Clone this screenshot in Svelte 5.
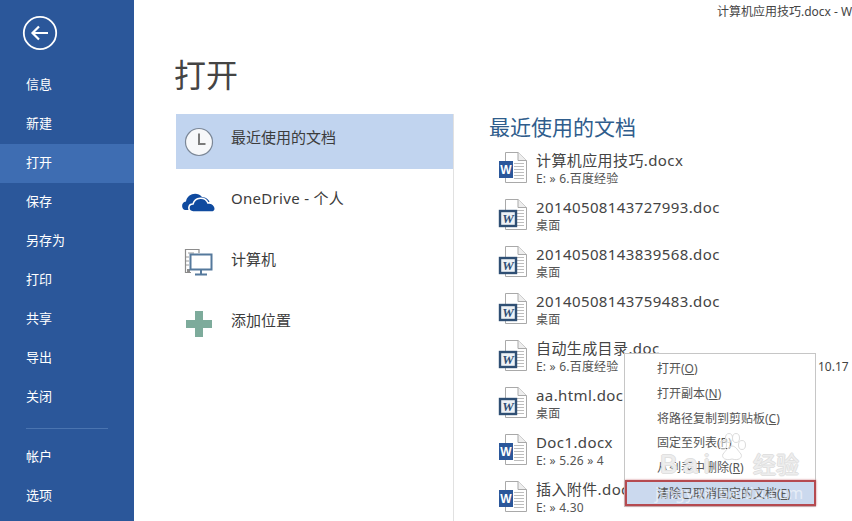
<script>
	const nav = ['信息', '新建', '打开', '保存', '另存为', '打印', '共享', '导出', '关闭'];
	const navBottom = ['帐户', '选项'];
	const docs = [
		{ name: '计算机应用技巧.docx', path: 'E: » 6.百度经验', modern: true },
		{ name: '20140508143727993.doc', path: '桌面', modern: false },
		{ name: '20140508143839568.doc', path: '桌面', modern: false },
		{ name: '20140508143759483.doc', path: '桌面', modern: false },
		{ name: '自动生成目录.doc', path: 'E: » 6.百度经验', modern: false },
		{ name: 'aa.html.doc', path: '桌面', modern: false },
		{ name: 'Doc1.docx', path: 'E: » 5.26 » 4', modern: true },
		{ name: '插入附件.docx', path: 'E: » 4.30', modern: true }
	];
	const menu = [
		{ label: '打开', key: 'O' },
		{ label: '打开副本', key: 'N' },
		{ label: '将路径复制到剪贴板', key: 'C' },
		{ label: '固定至列表', key: 'P' },
		{ label: '从列表中删除', key: 'R' },
		{ label: '清除已取消固定的文档', key: 'E', active: true }
	];
</script>

{#snippet docIcon(modern)}
	<svg class="doc-icon" viewBox="0 0 30 32" aria-hidden="true">
		<path d="M7.5 .5H20L28.5 8.5V30.5H7.5Z" fill="#fff" stroke="#a9a9a9" />
		<path d="M20 .5V8.5H28.5" fill="#eee" stroke="#a9a9a9" />
		<path d="M16 11.5H26M16 14.5H26M16 17.5H26M16 20.5H26M16 23.5H26M16 26.5H26" stroke="#bdbdbd" />
		{#if modern}
			<rect x="1" y="9" width="14" height="17" fill="#2b579a" />
			<text x="8" y="22" class="w-solid">W</text>
		{:else}
			<rect x="2" y="12" width="16" height="15" fill="#eef2f6" stroke="#2f4f74" stroke-width="2.4" />
			<text x="10" y="24" class="w-old">W</text>
		{/if}
	</svg>
{/snippet}

<div class="window">
	<aside class="sidebar">
		<div class="back">
			<svg viewBox="0 0 36 36" width="36" height="36" aria-hidden="true">
				<circle cx="18" cy="18" r="16.2" fill="none" stroke="#fff" stroke-width="1.8" />
				<path d="M10.5 18H26M17 11.5L10.5 18L17 24.5" fill="none" stroke="#fff" stroke-width="2.2" />
			</svg>
		</div>
		<nav class="nav">
			{#each nav as item}
				<div class="nav-item" class:selected={item === '打开'}>{item}</div>
			{/each}
		</nav>
		<div class="nav-rule"></div>
		<nav class="nav">
			{#each navBottom as item}
				<div class="nav-item">{item}</div>
			{/each}
		</nav>
	</aside>

	<main class="content">
		<div class="doc-title">计算机应用技巧.docx - W</div>
		<h1>打开</h1>
		<div class="columns">
			<section class="places">
				<div class="place selected">
					<svg class="place-icon" viewBox="0 0 30 30" aria-hidden="true">
						<circle cx="15" cy="15" r="13.5" fill="#f7f8fa" stroke="#7b8797" stroke-width="1.2" />
						<path d="M15 6.5V17H21.5" fill="none" stroke="#7b7b7b" stroke-width="2" />
					</svg>
					<span>最近使用的文档</span>
				</div>
				<div class="place">
					<svg class="place-icon cloud" viewBox="0 0 34 24" aria-hidden="true">
						<path d="M3 21C-1 20 -1 13 4 12.500C5 5 15 2 20 8C25 8 28 12 28 15L12 21Z" fill="#0f4a9f" />
						<path d="M11 23C5 22 6 15 11 15C13 8 23 7 26 14C32 13 36 21 31 23Z" fill="#0f4a9f" stroke="#fff" stroke-width="1.6" />
					</svg>
					<span class="latin">OneDrive - 个人</span>
				</div>
				<div class="place">
					<svg class="place-icon" viewBox="0 0 30 30" aria-hidden="true">
						<path d="M7 24.500H1.500V1.500H15V5" fill="none" stroke="#8c8c8c" stroke-width="1.200" />
						<path d="M4 5H10M2 9H5M2 13H5M2 17H5" stroke="#9a9a9a" />
						<rect x="3" y="21" width="3" height="3" fill="#8c8c8c" />
						<rect x="6.500" y="6.500" width="21" height="15" fill="#fff" stroke="#55799c" stroke-width="2" />
						<path d="M17 22V26M11 26.500H23" stroke="#55799c" stroke-width="2" />
					</svg>
					<span>计算机</span>
				</div>
				<div class="place">
					<svg class="place-icon" viewBox="0 0 30 30" aria-hidden="true">
						<path d="M11 2H19V11H28V19H19V28H11V19H2V11H11Z" fill="#7dab9b" />
					</svg>
					<span>添加位置</span>
				</div>
			</section>

			<section class="recent">
				<h2>最近使用的文档</h2>
				<ul>
					{#each docs as doc}
						<li>
							{@render docIcon(doc.modern)}
							<div class="doc-text">
								<div class="doc-name">{doc.name}</div>
								<div class="doc-path">{doc.path}</div>
							</div>
						</li>
					{/each}
				</ul>
			</section>
		</div>
	</main>

	<span class="stray-date">10.17</span>

	<div class="menu">
		{#each menu as row}
			<div class="menu-row" class:active={row.active}>{row.label}(<u>{row.key}</u>)</div>
		{/each}
	</div>

	<div class="watermark">
		<span class="wm-bai">Bai</span>
		<svg class="wm-paw" viewBox="0 0 30 30" aria-hidden="true">
			<g fill="rgba(255,255,255,.5)" stroke="#dcdcdc" stroke-width="1">
				<ellipse cx="6" cy="13" rx="3.500" ry="4.500" />
				<ellipse cx="12" cy="6" rx="3.500" ry="4.500" />
				<ellipse cx="19" cy="6" rx="3.500" ry="4.500" />
				<ellipse cx="25" cy="13" rx="3.500" ry="4.500" />
				<path d="M15 14C19 14 21 19 24 22C26 26 21 29 15 27C9 29 4 26 6 22C9 19 11 14 15 14Z" />
			</g>
		</svg>
		<span class="wm-jy">经验</span>
		<span class="wm-url">jingyan.baidu.com</span>
	</div>
</div>

<style>
	:global(body) {
		margin: 0;
		background: #fff;
	}

	.window {
		position: relative;
		display: flex;
		width: 852px;
		height: 521px;
		overflow: hidden;
		font-family: 'Noto Sans', 'Noto Sans CJK SC', sans-serif;
		color: #444;
	}

	.sidebar {
		flex: 0 0 134px;
		background: #2b579a;
		color: #fff;
		font-size: 13px;
	}

	.back {
		padding: 15px 0 0 22px;
		height: 51px;
	}

	.nav-item {
		height: 39px;
		padding-left: 26px;
		line-height: 37px;
	}

	.nav-item.selected {
		background: #3e6db2;
	}

	.nav-rule {
		width: 82px;
		height: 1px;
		margin: 11px 0 9px 26px;
		background: #4a74b0;
	}

	.content {
		position: relative;
		flex: 1;
		min-width: 0;
	}

	.doc-title {
		height: 22px;
		line-height: 24px;
		padding-left: 583px;
		font-size: 12px;
		white-space: nowrap;
		color: #444;
	}

	h1 {
		margin: 28px 0 0 40px;
		height: 64px;
		font-size: 32px;
		line-height: 50px;
		font-weight: 400;
		color: #444;
	}

	.columns {
		display: flex;
		height: 407px;
	}

	.places {
		flex: 0 0 277px;
		margin-left: 42px;
		display: flex;
		flex-direction: column;
		gap: 6px;
		border-right: 1px solid #e1e1e1;
		font-size: 15px;
		color: #3c3c3c;
	}

	.place {
		display: flex;
		align-items: center;
		gap: 17px;
		height: 55px;
		padding-left: 8px;
		flex: none;
	}

	.place span {
		padding-bottom: 10px;
	}

	.place.selected {
		background: #c1d4ef;
	}

	.place-icon {
		width: 30px;
		height: 30px;
		flex: none;
		margin-top: -2px;
	}

	.place.selected .place-icon {
		margin-top: 0;
	}

	.place-icon.cloud {
		width: 34px;
		margin-left: -2px;
		margin-right: -2px;
		margin-top: -3px;
	}

	.latin {
		letter-spacing: 0.3px;
	}

	.recent {
		flex: 1;
		padding-left: 35px;
		min-width: 0;
	}

	h2 {
		margin: 0;
		font-size: 21px;
		line-height: 27px;
		font-weight: 400;
		color: #2f5d8c;
	}

	ul {
		list-style: none;
		margin: 0;
		padding: 9px 0 0 9px;
	}

	li {
		display: flex;
		gap: 8px;
		height: 47px;
		white-space: nowrap;
	}

	.doc-icon {
		width: 30px;
		height: 32px;
		margin-top: 2px;
		flex: none;
	}

	.doc-name {
		font-size: 15px;
		line-height: 21px;
		letter-spacing: 0.4px;
		color: #444;
	}

	.doc-path {
		font-size: 12px;
		line-height: 15px;
		letter-spacing: 0.2px;
		color: #555;
	}

	.w-solid {
		font: 700 12px 'Liberation Sans', sans-serif;
		text-anchor: middle;
		fill: #fff;
	}

	.w-old {
		font: italic 700 13px 'Liberation Serif', serif;
		text-anchor: middle;
		fill: #2f4f74;
	}

	.stray-date {
		position: absolute;
		left: 818px;
		top: 358px;
		font-size: 12px;
		line-height: 18px;
	}

	.menu {
		position: absolute;
		left: 624px;
		top: 353px;
		width: 192px;
		height: 154px;
		padding-top: 3px;
		box-sizing: border-box;
		background: #fff;
		border: 1px solid #c6c6c6;
		font-size: 12px;
		color: #555;
	}

	.menu-row {
		height: 24.800px;
		line-height: 24px;
		padding-left: 32px;
		white-space: nowrap;
	}

	.menu-row.active {
		position: absolute;
		left: 0;
		right: -1px;
		top: 126px;
		box-sizing: border-box;
		height: 26px;
		padding-left: 30px;
		background: #cbd9ee;
		border: 2px solid #b54a50;
		box-shadow: 0 0 2px #c9787c;
	}

	/* stock-site stamp sits over the menu in the source image */
	.watermark {
		position: absolute;
		left: 0;
		top: 0;
		width: 852px;
		height: 521px;
		pointer-events: none;
	}

	.wm-bai,
	.wm-jy {
		position: absolute;
		color: rgba(255, 255, 255, 0.45);
		text-shadow:
			1px 0 #e0e0e0,
			-1px 0 #e0e0e0,
			0 1px #e0e0e0,
			0 -1px #e0e0e0;
	}

	.wm-bai {
		left: 660px;
		top: 449px;
		font: 400 26px/30px 'Liberation Sans', sans-serif;
		letter-spacing: 6px;
	}

	.wm-paw {
		position: absolute;
		left: 717px;
		top: 432px;
		width: 30px;
		height: 30px;
	}

	.wm-jy {
		left: 753px;
		top: 449px;
		font-size: 23px;
		line-height: 30px;
	}

	.wm-url {
		position: absolute;
		left: 655px;
		top: 482px;
		font-size: 16px;
		line-height: 22px;
		letter-spacing: 0.6px;
		color: rgba(255, 255, 255, 0.55);
	}
</style>
